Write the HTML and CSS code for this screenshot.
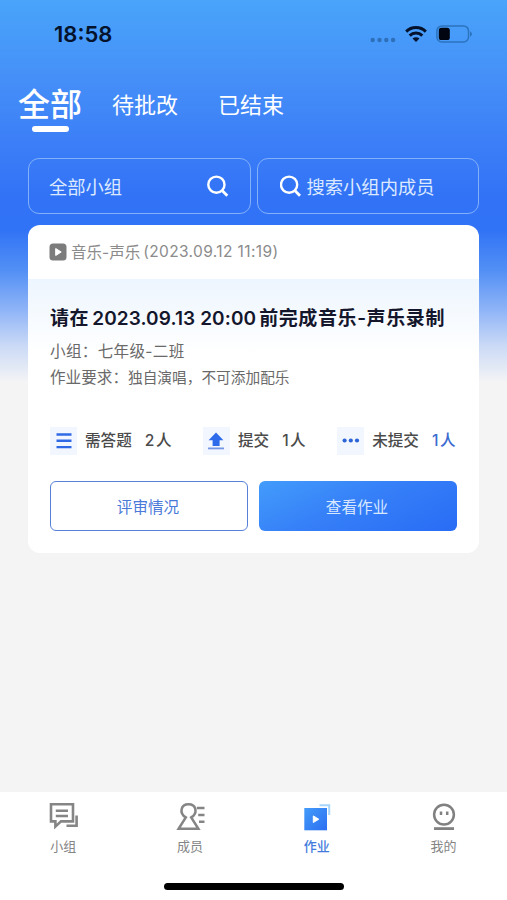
FILE: index.html
```html
<!DOCTYPE html>
<html lang="zh-CN">

<head>
  <meta charset="UTF-8">
  <meta name="viewport" content="width=device-width, initial-scale=1.0">
  <title>作业</title>
  <link rel="stylesheet" href="styles.css">
</head>

<body>
  <div class="page">
    <!-- Status bar -->
    <div class="status-bar">
      <span class="time">18:58</span>
      <div class="status-icons">
        <svg class="signal" width="26" height="6" viewBox="0 0 26 6" fill="#2d6fb9">
          <circle cx="2.7" cy="3" r="2.2" />
          <circle cx="9.5" cy="3" r="2.2" />
          <circle cx="16.3" cy="3" r="2.2" />
          <circle cx="23.1" cy="3" r="2.2" />
        </svg>
        <svg class="wifi" width="22" height="16" viewBox="0 0 22 16" fill="none" stroke="#04122c" stroke-width="3">
          <path d="M1.2 5.6A14 14 0 0 1 20.8 5.6" />
          <path d="M4.7 9.6A9 9 0 0 1 17.3 9.6" />
          <path d="M11 16L7.5 12.6A5 5 0 0 1 14.5 12.6Z" fill="#04122c" stroke="none" />
        </svg>
        <svg class="battery" width="36" height="18" viewBox="0 0 36 18">
          <rect x="0.9" y="0.9" width="31.6" height="16" rx="5" fill="none" stroke="#2b73bd" stroke-width="1.5" />
          <rect x="2.8" y="2.8" width="11" height="12.2" rx="2.6" fill="#000511" />
          <path d="M34 6.2Q38 9 34 11.8Z" fill="#2b73bd" />
        </svg>
      </div>
    </div>

    <!-- Tabs -->
    <div class="tabs">
      <a class="tab active">全部</a>
      <a class="tab">待批改</a>
      <a class="tab">已结束</a>
    </div>

    <!-- Search -->
    <div class="filters">
      <div class="filter group">
        <span>全部小组</span>
        <svg width="22" height="22" viewBox="0 0 22 22" fill="none" stroke="#fff" stroke-width="2.4">
          <circle cx="9.4" cy="9.7" r="8.1" />
          <path d="M15.1 15.5L20.3 20.7" stroke-width="2.8" />
        </svg>
      </div>
      <div class="filter member">
        <svg width="22" height="22" viewBox="0 0 22 22" fill="none" stroke="#fff" stroke-width="2.4">
          <circle cx="9.1" cy="9.7" r="8.1" />
          <path d="M14.8 15.5L20 20.7" stroke-width="2.8" />
        </svg>
        <span>搜索小组内成员</span>
      </div>
    </div>

    <!-- Homework card -->
    <div class="card">
      <div class="card-header">
        <svg width="18" height="18" viewBox="0 0 18 18">
          <rect x="0.5" y="0.5" width="17" height="17" rx="3.5" fill="#7c7c7c" />
          <path d="M6.7 5.5L12.2 9L6.7 12.5Z" fill="#fff" stroke="#fff" stroke-linejoin="round" />
        </svg>
        <span class="subject">音乐-声乐</span>
        <span class="date">(2023.09.12 11:19)</span>
      </div>
      <div class="card-body">
        <h2><span>请在</span><span class="deadline">2023.09.13 20:00</span><span>前完成音乐-声乐录制</span></h2>
        <p class="class-name">小组：七年级-二班</p>
        <p class="request">作业要求：<span>独自演唱，不可添加配乐</span></p>

        <div class="stats">
          <div class="stat">
            <span class="stat-icon">
              <svg width="16" height="16" viewBox="0 0 16 16" stroke="#3069e5" stroke-width="2.4">
                <path d="M0.5 1.5H15.5M0.5 7.8H15.5M0.5 14.1H15.5" />
              </svg>
            </span>
            <span class="label">需答题</span>
            <span class="count">2人</span>
          </div>
          <div class="stat">
            <span class="stat-icon">
              <svg width="18" height="18" viewBox="0 0 18 18">
                <path d="M9 0.6L16.4 8.2H12.6V14H5.6V8.2H1.6Z" fill="#2d6bea" />
                <path d="M1 16.4H17" stroke="#7397e4" stroke-width="1.8" />
              </svg>
            </span>
            <span class="label">提交</span>
            <span class="count">1人</span>
          </div>
          <div class="stat">
            <span class="stat-icon">
              <svg width="18" height="6" viewBox="0 0 18 6" fill="#2d64d8">
                <circle cx="2.6" cy="2.5" r="2.1" />
                <circle cx="8.8" cy="2.5" r="2.1" />
                <circle cx="15" cy="2.5" r="2.1" />
              </svg>
            </span>
            <span class="label">未提交</span>
            <span class="count blue">1人</span>
          </div>
        </div>

        <div class="actions">
          <button class="btn">评审情况</button>
          <button class="btn primary">查看作业</button>
        </div>
      </div>
    </div>

    <!-- Bottom navigation -->
    <div class="bottom">
      <div class="nav">
        <a class="nav-item">
          <svg width="30" height="30" viewBox="0 0 30 30" fill="none" stroke="#858585" stroke-width="2.6">
            <path d="M3 3.2H25V20.4H13L7.4 25.6V20.4H3Z" />
            <path d="M7.8 9.8H20M7.8 15H20" />
            <path d="M28.6 14.5V24.8H18.5" />
          </svg>
          <span>小组</span>
        </a>
        <a class="nav-item">
          <svg width="30" height="30" viewBox="0 0 30 30" fill="none" stroke="#858585" stroke-width="2.5">
            <path d="M10.8 16.4C3.8 12 5.8 3.2 13.5 3.2S23.2 12 16.2 16.4L23.4 27.8H3.6Z" />
            <path d="M21.8 7.1H29.5M23.2 13.9H29.5M24 20.8H29.5" />
          </svg>
          <span>成员</span>
        </a>
        <a class="nav-item active">
          <svg width="30" height="30" viewBox="0 0 30 30">
            <defs>
              <linearGradient id="work" x1="0" y1="0" x2="1" y2="1">
                <stop offset="0" stop-color="#439bf9" />
                <stop offset="1" stop-color="#2c6ff2" />
              </linearGradient>
            </defs>
            <path d="M17.5 4.2H27.2V14" fill="none" stroke="#a7d5fc" stroke-width="2" />
            <rect x="2.3" y="7" width="22.7" height="22.3" fill="url(#work)" />
            <path d="M11.3 14.9L16.8 18.2L11.3 21.5Z" fill="#fff" stroke="#fff" stroke-linejoin="round" />
          </svg>
          <span>作业</span>
        </a>
        <a class="nav-item">
          <svg width="30" height="30" viewBox="0 0 30 30" fill="none" stroke="#818181" stroke-width="2.5">
            <circle cx="15" cy="13.6" r="9.9" />
            <path d="M5 27.6H25" stroke-width="2.8" />
            <path d="M12 10.4V14M18.2 10.4V14" />
          </svg>
          <span>我的</span>
        </a>
      </div>
      <div class="home-bar"></div>
    </div>
  </div>
</body>

</html>
```

FILE: styles.css
```css
* {
  box-sizing: border-box;
}

body {
  margin: 0;
  font-family: Inter, "Noto Sans CJK SC", sans-serif;
  background-color: #f4f4f5;
}

.page {
  height: 900px;
  display: flex;
  flex-direction: column;
  background: linear-gradient(180deg, #49a4fa 0, #458ff8 80px, #3c7ff7 140px, #3172f6 200px, #3173f6 230px, #528ff5 270px, #8fb4f7 310px, #c9d9f6 345px, #f4f4f5 382px);
}

svg {
  display: block;
  flex: none;
}

.status-bar {
  height: 68px;
  padding: 0 35px 0 54px;
  display: flex;
  justify-content: space-between;
  align-items: center;
}

.time {
  color: #04122c;
  font-size: 22px;
  font-weight: 600;
}

.status-icons {
  display: flex;
  align-items: center;
}

.signal {
  margin: 11px 9px 0 0;
}

.battery {
  margin-left: 9px;
}

.tabs {
  height: 90px;
  padding: 17px 0 0 18px;
  display: flex;
  align-items: flex-start;
  color: #fff;
}

.tab {
  margin: 0 40px 0 0;
  font-size: 22px;
  line-height: 40px;
}

.tab.active {
  margin: 0 30px 0 0;
  font-size: 32px;
  font-weight: 500;
}

.tab.active::after {
  content: "";
  display: block;
  width: 37px;
  height: 6px;
  margin: 1px auto 0;
  border-radius: 3px;
  background: #fff;
}

.filters {
  display: flex;
  gap: 6px;
  padding: 0 28px;
}

.filter {
  width: 223px;
  height: 56px;
  display: flex;
  align-items: center;
  border: 1.5px solid #82b1fa;
  border-radius: 11px;
  color: #dce9ff;
  font-size: 18.3px;
}

.filter.group {
  padding: 0 21px 0 20px;
  justify-content: space-between;
}

.filter.member {
  padding-left: 22px;
  gap: 5px;
}

.card {
  height: 328px;
  margin: 11px 28px 0;
  border-radius: 12px;
  background: #fff;
  overflow: hidden;
}

.card-header {
  height: 54px;
  padding: 0 21px;
  display: flex;
  align-items: center;
  color: #8b8b8b;
  font-size: 15.5px;
}

.subject {
  margin: -2px 3px 0 4px;
}

.date {
  margin-top: -1px;
  letter-spacing: 0.38px;
}

.card-body {
  padding: 26px 22px 0;
  background: linear-gradient(180deg, #edf5fe 0, #fff 75px);
}

h2 {
  margin: 0;
  display: flex;
  gap: 3px;
  color: #14162c;
  font-size: 19px;
  font-weight: 600;
  line-height: 28px;
  letter-spacing: 0.6px;
  white-space: nowrap;
}

.deadline {
  letter-spacing: 0.1px;
}

p {
  margin: 0;
  color: #696969;
  font-size: 15.6px;
  line-height: 26px;
}

.class-name {
  margin-top: 6px;
  letter-spacing: 0.3px;
}

.request span {
  font-size: 14.7px;
}

.stats {
  margin-top: 36px;
  display: flex;
  justify-content: space-between;
}

.stat {
  display: flex;
  align-items: center;
  color: #4b4b4b;
  font-size: 15.6px;
  font-weight: 500;
  line-height: 28px;
}

.stat-icon {
  width: 27px;
  height: 28px;
  display: flex;
  align-items: center;
  justify-content: center;
  background: #f2f6fe;
}

.label {
  margin: 0 13px 0 8px;
}

.count {
  letter-spacing: 1.5px;
}

.blue {
  color: #3b6bd0;
}

.actions {
  margin-top: 26px;
  display: flex;
  gap: 11px;
}

.btn {
  width: 198px;
  height: 50px;
  padding: 0 2px 1px 0;
  border: 1.5px solid #5681d7;
  border-radius: 6px;
  background: #fff;
  color: #4a79d9;
  font-family: inherit;
  font-size: 15.6px;
}

.btn.primary {
  border: 0;
  background: linear-gradient(155deg, #439cfb 0%, #3680f8 45%, #286cf5 100%);
  color: #d6e7ff;
}

.bottom {
  height: 108px;
  margin-top: auto;
  padding-top: 9px;
  background: #fff;
}

.nav {
  display: flex;
}

.nav-item {
  flex: 1;
  display: flex;
  flex-direction: column;
  align-items: center;
  color: #858585;
  font-size: 13px;
  line-height: 20px;
}

.nav-item span {
  margin-top: 5px;
}

.nav-item.active {
  color: #427bdc;
  font-weight: 500;
}

.home-bar {
  width: 180px;
  height: 7px;
  margin: 27px auto 0;
  border-radius: 4px;
  background: #000;
}
```
